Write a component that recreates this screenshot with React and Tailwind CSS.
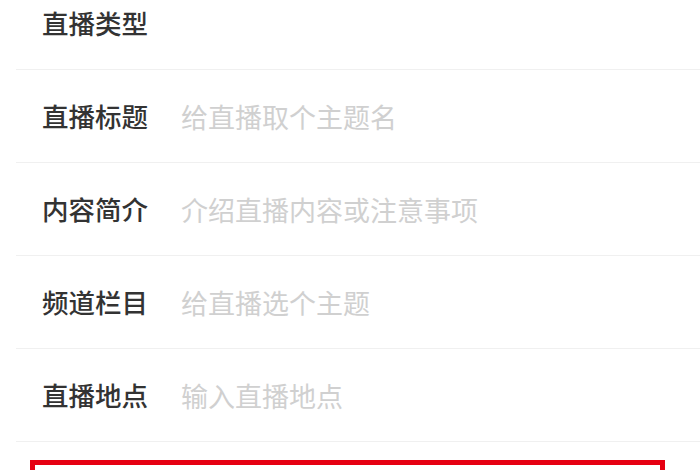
import React from "react";

const fields = [
  { label: "直播类型", hint: "" },
  { label: "直播标题", hint: "给直播取个主题名" },
  { label: "内容简介", hint: "介绍直播内容或注意事项" },
  { label: "频道栏目", hint: "给直播选个主题" },
  { label: "直播地点", hint: "输入直播地点" },
];

export default function App() {
  return (
    <div
      className="w-[700px] h-[470px] overflow-hidden bg-white"
      style={{ fontFamily: '"Noto Sans CJK SC", "Noto Sans", sans-serif' }}
    >
      {/* form rows, list scrolled a bit so the first row is cut off */}
      <div className="-mt-[23px] ml-[16px]">
        {fields.map((f) => (
          <div key={f.label} className="flex items-center h-[93px] border-b border-[#f0f0f0]">
            <div className="w-[165px] pl-[26px] text-[26.5px] leading-none font-medium text-[#333333]">{f.label}</div>
            <div className="text-[27px] leading-none text-[#d0d0d0]">{f.hint}</div>
          </div>
        ))}
      </div>

      {/* highlighted button area */}
      <div className="mt-[18px] ml-[30px] w-[635px] h-[60px] border-[5px] border-[#e60012] bg-white" />
    </div>
  );
}
